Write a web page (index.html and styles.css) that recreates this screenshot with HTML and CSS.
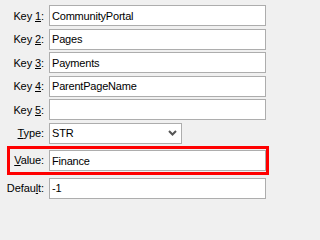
FILE: index.html
```html
<!DOCTYPE html>
<html>
<head>
<meta charset="utf-8">
<link rel="stylesheet" href="styles.css">
</head>
<body>
<div class="form">
  <div class="row"><label class="lbl">Key <u>1</u>:</label><div class="field">CommunityPortal</div></div>
  <div class="row"><label class="lbl">Key <u>2</u>:</label><div class="field">Pages</div></div>
  <div class="row"><label class="lbl">Key <u>3</u>:</label><div class="field">Payments</div></div>
  <div class="row"><label class="lbl">Key <u>4</u>:</label><div class="field">ParentPageName</div></div>
  <div class="row"><label class="lbl">Key <u>5</u>:</label><div class="field"></div></div>
  <div class="row"><label class="lbl"><u>T</u>ype:</label><div class="field select"><span>STR</span><svg class="arrow" width="9" height="6" viewBox="0 0 9 6"><path d="M1 1 L4.5 4.5 L8 1" fill="none" stroke="#555" stroke-width="2"/></svg></div></div>
  <div class="row highlight"><label class="lbl"><u>V</u>alue:</label><div class="field">Finance</div></div>
  <div class="row"><label class="lbl">Defau<u>l</u>t:</label><div class="field">-1</div></div>
</div>
</body>
</html>
```
FILE: styles.css
```css
html, body {
  margin: 0;
  padding: 0;
  background: #f0f0f0;
}
body {
  font-family: "Liberation Sans", Arial, sans-serif;
  font-size: 11px;
  color: #000;
}
.form {
  display: flex;
  flex-direction: column;
  gap: 2.5px;
  width: 271px;
  height: 202px;
  box-sizing: border-box;
  padding: 5px 5px 0 0;
}
.row {
  display: flex;
  align-items: center;
  height: 21px;
  flex: none;
}
.lbl {
  width: 44px;
  margin-right: 5px;
  text-align: right;
  flex: none;
  letter-spacing: -0.1px;
}
.lbl u {
  text-underline-offset: 1px;
}
.field {
  flex: 1;
  height: 21px;
  box-sizing: border-box;
  border: 1px solid #adadad;
  background: #fff;
  padding: 0 2px;
  display: flex;
  align-items: center;
  letter-spacing: -0.2px;
}
.select {
  flex: none;
  width: 133px;
  justify-content: space-between;
  padding-right: 4px;
}
.arrow {
  display: block;
}
.highlight {
  height: 22px;
  border: 3px solid #ff0000;
  margin: 0 -3px 0 7px;
  padding: 1px 0 0 0;
  align-items: flex-start;
}
.highlight .lbl {
  width: 34px;
  height: 21px;
  line-height: 21px;
}
```
